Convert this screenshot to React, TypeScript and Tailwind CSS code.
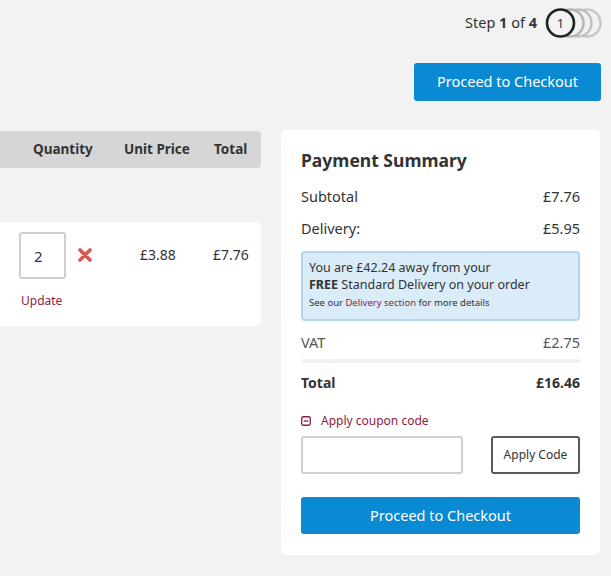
import React from 'react'

function StepRings() {
  return (
    <svg width="58" height="34" viewBox="0 0 58 34" className="block">
      <circle cx="42" cy="17" r="13.5" fill="none" stroke="#c8c8c8" strokeWidth="2.5" />
      <circle cx="33" cy="17" r="13.5" fill="#f2f2f2" stroke="#c0c0c0" strokeWidth="2.5" />
      <circle cx="25" cy="17" r="13.5" fill="#f2f2f2" stroke="#b5b5b5" strokeWidth="2.5" />
      <circle cx="15.5" cy="17" r="13.5" fill="#f2f2f2" stroke="#222" strokeWidth="2.6" />
      <text x="15.5" y="21.5" textAnchor="middle" fontSize="13" fill="#333" fontFamily="'Noto Sans', sans-serif">1</text>
    </svg>
  )
}

function RemoveIcon() {
  return (
    <svg width="16" height="16" viewBox="0 0 16 16">
      <path d="M3 3 L13 13 M13 3 L3 13" stroke="#e05552" strokeWidth="3.6" strokeLinecap="round" />
    </svg>
  )
}

function MinusSquare() {
  return (
    <svg width="10" height="10" viewBox="0 0 10 10">
      <rect x="0.75" y="0.75" width="8.5" height="8.5" rx="1.5" fill="none" stroke="#8e1b3f" strokeWidth="1.3" />
      <path d="M2.8 5 H7.2" stroke="#8e1b3f" strokeWidth="1.3" />
    </svg>
  )
}

export default function App() {
  return (
    <div
      className="min-h-screen bg-[#f2f2f2] pr-[11px] text-[#333]"
      style={{ fontFamily: "'Noto Sans', 'Open Sans', sans-serif" }}
    >
      {/* Step indicator */}
      <div className="flex items-center justify-end pt-[6px] -mr-[3px]">
        <span className="text-[14.5px] text-[#333] mr-[8px]">
          Step <b>1</b> of <b>4</b>
        </span>
        <StepRings />
      </div>

      {/* Top checkout button */}
      <div className="flex justify-end mt-[23px] -mr-[1px]">
        <button className="h-[38px] w-[187px] rounded-[3px] bg-[#0a8ad3] text-[14.5px] text-white">
          Proceed to Checkout
        </button>
      </div>

      <div className="flex justify-end gap-5 mt-[29px]">
        {/* Basket table (cropped) */}
        <div className="w-[261px] pt-[1px]">
          <div className="flex items-center h-[37px] bg-[#d6d6d6] rounded-r-[4px] pl-[33px] text-[13.5px] font-bold text-[#333]">
            <div className="w-[91px]">Quantity</div>
            <div className="w-[90px]">Unit Price</div>
            <div>Total</div>
          </div>

          <div className="mt-[54px] h-[104px] bg-white rounded-r-[5px] pt-[10px] pl-[19px]">
            <div className="flex">
              <input
                defaultValue="2"
                className="w-[47px] h-[47px] border-2 border-[#cfcfcf] rounded-[3px] pl-[13px] text-[15px] text-[#333] outline-none"
              />
              <div className="ml-[11px] mt-[15px]">
                <RemoveIcon />
              </div>
              <div className="ml-[47px] mt-[12px] text-[14px] w-[73px]">£3.88</div>
              <div className="mt-[12px] text-[14px]">£7.76</div>
            </div>
            <div className="mt-[13px] pl-[2px] text-[12px] text-[#8e1b3f]">Update</div>
          </div>
        </div>

        {/* Payment summary */}
        <div className="w-[319px] bg-white rounded-[5px] px-5 pt-[18px] pb-[21px]">
          <h2 className="text-[17.5px] leading-[24px] font-bold text-[#333]">Payment Summary</h2>

          <div className="mt-[13px] flex justify-between text-[14.5px] leading-[22px] text-[#333]">
            <span>Subtotal</span>
            <span>£7.76</span>
          </div>
          <div className="mt-[10px] flex justify-between text-[14.5px] leading-[22px] text-[#333]">
            <span>Delivery:</span>
            <span>£5.95</span>
          </div>

          <div className="mt-[12px] bg-[#d9ecf7] border-2 border-[#b3d6ec] rounded-[4px] px-[6px] pt-[6px] pb-[9px]">
            <div className="text-[12.5px] leading-[17px] text-[#333]">You are £42.24 away from your</div>
            <div className="text-[12.5px] leading-[17px] text-[#333]">
              <b>FREE</b> Standard Delivery on your order
            </div>
            <div className="mt-[3px] text-[9.5px] leading-[14px] text-[#333]">
              See our <span className="text-[#8e1b3f]">Delivery section</span> for more details
            </div>
          </div>

          <div className="mt-[10px] flex justify-between text-[14.5px] leading-[22px] text-[#555]">
            <span>VAT</span>
            <span>£2.75</span>
          </div>
          <div className="mt-[6px] h-[4px] rounded-full bg-[#f0f0f0]" />
          <div className="mt-[9px] flex justify-between text-[14px] leading-[22px] font-bold text-[#333]">
            <span>Total</span>
            <span>£16.46</span>
          </div>

          <div className="mt-[19px] flex items-center gap-[10px] text-[12px] leading-[16px] text-[#8e1b3f]">
            <MinusSquare />
            <span>Apply coupon code</span>
          </div>
          <div className="mt-[7px] flex justify-between">
            <input className="w-[162px] h-[38px] border-2 border-[#d0d0d0] rounded-[3px] outline-none" />
            <button className="w-[89px] h-[38px] border-2 border-[#5a5a5a] rounded-[3px] text-[12px] text-[#333] bg-white">
              Apply Code
            </button>
          </div>

          <button className="mt-[23px] w-full h-[37px] rounded-[3px] bg-[#0a8ad3] text-[14.5px] text-white">
            Proceed to Checkout
          </button>
        </div>
      </div>
    </div>
  )
}
